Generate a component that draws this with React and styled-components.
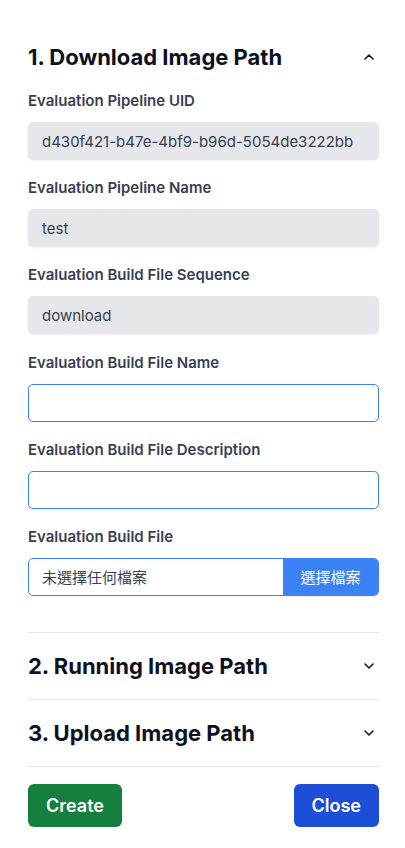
import React from 'react'
import styled, { createGlobalStyle, css } from 'styled-components'

const GlobalStyle = createGlobalStyle`
  html, body {
    margin: 0;
    padding: 0;
    background: #ffffff;
  }
  body {
    font-family: Inter, "Noto Sans CJK TC", "Noto Sans", sans-serif;
    color: #111827;
  }
  * {
    box-sizing: border-box;
  }
`

const Page = styled.div`
  padding: 24px 26px 24px 28px;
`

const Section = styled.section(
  ({ $first }) => css`
    border-top: ${$first ? 'none' : '1px solid #e5e7eb'};
  `,
)

const Header = styled.button`
  display: flex;
  width: 100%;
  align-items: center;
  justify-content: space-between;
  padding: 19px 0;
  border: 0;
  background: none;
  cursor: pointer;
  text-align: left;
`

const Title = styled.h2`
  margin: 0;
  font-family: Inter, sans-serif;
  font-size: 22px;
  line-height: 28px;
  font-weight: 700;
  color: #0b1120;
`

const Chevron = styled.svg`
  margin-right: 5px;
  flex: 0 0 auto;
`

const Content = styled.div`
  padding: 1px 0 18px;
`

const Field = styled.div`
  display: flex;
  flex-direction: column;
  gap: 11px;
  margin-bottom: 18.2px;
`

const Label = styled.label`
  font-size: 15px;
  line-height: 20px;
  font-weight: 600;
  color: #374151;
`

const Input = styled.input(
  ({ readOnly }) => css`
    height: 38px;
    width: 100%;
    padding: 0 13px;
    border-radius: 5px;
    font-family: Inter, sans-serif;
    font-size: 15px;
    color: #374151;
    outline: none;
    box-shadow: 0 1px 2px rgba(0, 0, 0, 0.05);
    ${readOnly
      ? css`
          background: #e5e7eb;
          border: 1px solid #e5e7eb;
        `
      : css`
          background: #ffffff;
          border: 1px solid #3b82f6;
        `}
  `,
)

const FileBox = styled.div`
  display: flex;
  height: 38px;
  border: 1px solid #3b82f6;
  border-radius: 5px;
  overflow: hidden;
  box-shadow: 0 1px 2px rgba(0, 0, 0, 0.05);
`

const FileName = styled.span`
  flex: 1;
  display: flex;
  align-items: center;
  padding-left: 13px;
  font-size: 15px;
  color: #374151;
`

const FileButton = styled.span`
  flex: 0 0 95px;
  display: flex;
  align-items: center;
  justify-content: center;
  background: #3b82f6;
  color: #ffffff;
  font-size: 15px;
`

const Footer = styled.div`
  display: flex;
  justify-content: space-between;
  border-top: 1px solid #e5e7eb;
  padding-top: 17px;
`

const Button = styled.button(
  ({ $color }) => css`
    height: 43px;
    padding: 0 18px;
    border: 0;
    border-radius: 6px;
    background: ${$color};
    color: #ffffff;
    font-family: Inter, sans-serif;
    font-size: 18px;
    font-weight: 600;
    cursor: pointer;
  `,
)

const ChevronIcon = ({ up }) => (
  <Chevron width="10" height="6" viewBox="0 0 10 6" fill="none">
    <path
      d={up ? 'M1 5L5 1L9 5' : 'M1 1L5 5L9 1'}
      stroke="#111827"
      strokeWidth="1.6"
      strokeLinecap="round"
      strokeLinejoin="round"
    />
  </Chevron>
)

const fields = [
  { label: 'Evaluation Pipeline UID', value: 'd430f421-b47e-4bf9-b96d-5054de3222bb', readOnly: true },
  { label: 'Evaluation Pipeline Name', value: 'test', readOnly: true },
  { label: 'Evaluation Build File Sequence', value: 'download', readOnly: true },
  { label: 'Evaluation Build File Name', value: '' },
  { label: 'Evaluation Build File Description', value: '' },
]

const App = () => {
  return (
    <Page>
      <GlobalStyle />
      <Section $first>
        <Header>
          <Title>1. Download Image Path</Title>
          <ChevronIcon up />
        </Header>
        <Content>
          {fields.map(({ label, value, readOnly }, i) => (
            <Field key={`field_${i}`}>
              <Label>{label}</Label>
              {readOnly ? (
                <Input readOnly value={value} />
              ) : (
                <Input defaultValue={value} />
              )}
            </Field>
          ))}
          <Field>
            <Label>Evaluation Build File</Label>
            <FileBox>
              <FileName>未選擇任何檔案</FileName>
              <FileButton>選擇檔案</FileButton>
            </FileBox>
          </Field>
        </Content>
      </Section>
      <Section>
        <Header>
          <Title>2. Running Image Path</Title>
          <ChevronIcon />
        </Header>
      </Section>
      <Section>
        <Header>
          <Title>3. Upload Image Path</Title>
          <ChevronIcon />
        </Header>
      </Section>
      <Footer>
        <Button $color="#15803d">Create</Button>
        <Button $color="#1d4ed8">Close</Button>
      </Footer>
    </Page>
  )
}

export default App
